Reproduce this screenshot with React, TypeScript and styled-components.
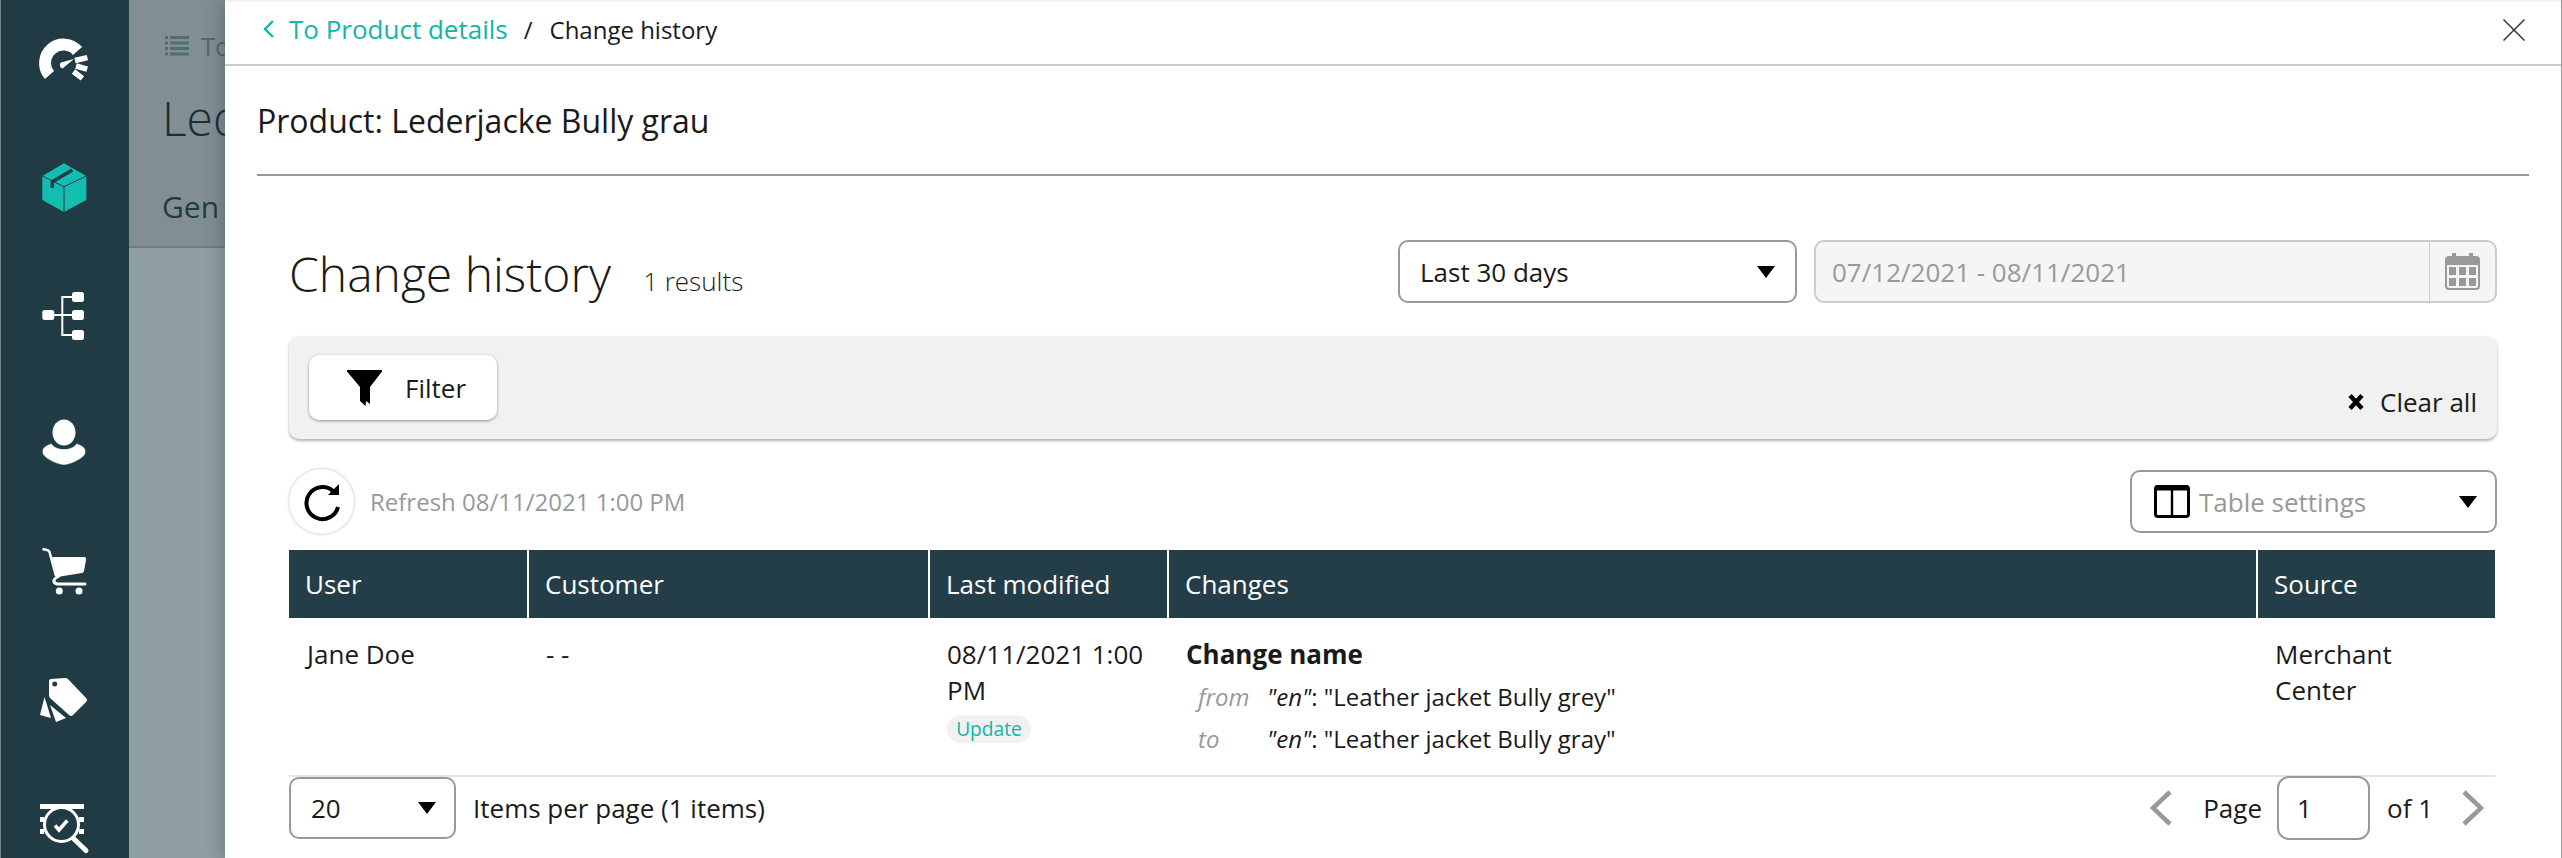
import React from "react";
import styled, { createGlobalStyle } from "styled-components";

const Global = createGlobalStyle`
  html, body { margin: 0; padding: 0; height: 100%; overflow: hidden; background: #8f9ea3; }
  * { box-sizing: border-box; }
  body { font-family: "Open Sans", "Liberation Sans", sans-serif; color: #1a1a1a; }
`;

const Page = styled.div`
  position: relative;
  display: flex;
  width: 2562px;
  height: 858px;
  overflow: hidden;
`;

const Sidebar = styled.nav`
  flex: 0 0 129px;
  display: flex;
  flex-direction: column;
  align-items: center;
  gap: 68px;
  padding-top: 30px;
  background: #213b45;
  border-left: 1.5px solid #75848a;
`;

const NavIcon = styled.svg`
  display: block;
  width: 60px;
  height: 60px;
  flex: none;
  margin-left: -1.5px;
`;

const Behind = styled.div`
  flex: 1;
  background: #8f9ea3;
`;

const BehindHead = styled.div`
  height: 248px;
  padding: 22px 0 0 33px;
  background: #818f94;
  border-bottom: 2px solid #6e7d83;
`;

const BehindCrumb = styled.div`
  display: flex;
  align-items: center;
  gap: 12px;
  height: 48px;
  padding-left: 3px;
  font-size: 25.6px;
  color: #55676e;
`;

const BehindTitle = styled.div`
  margin-top: 14px;
  font-size: 48px;
  font-weight: 300;
  line-height: 68px;
  color: #1d2d33;
  white-space: nowrap;
`;

const BehindTab = styled.div`
  margin-top: 35px;
  font-size: 30px;
  line-height: 40px;
  color: #213b45;
`;

const Modal = styled.div`
  position: absolute;
  left: 225px;
  top: 0;
  width: 2337px;
  height: 858px;
  background: #fff;
  border-right: 1.5px solid #999;
  box-shadow: 0 0 18px rgba(40, 55, 60, 0.45);
  overflow: hidden;
`;

const TopBar = styled.header`
  display: flex;
  align-items: center;
  height: 66px;
  padding: 0 36px 8px 37px;
  border-top: 2px solid #f1f1f1;
  border-bottom: 2px solid #ccc;
`;

const BackLink = styled.a`
  display: flex;
  align-items: center;
  gap: 14px;
  font-size: 26px;
  color: #13b5a8;
`;

const Slash = styled.span`
  margin: 0 17px 0 16px;
  font-size: 24px;
`;

const Current = styled.span`
  font-size: 24px;
`;

const CloseButton = styled.button`
  margin: 2px 0 0 auto;
  padding: 0;
  border: 0;
  background: none;
  line-height: 0;
`;

const ProductBlock = styled.div`
  display: flex;
  align-items: center;
  height: 110px;
  margin: 0 32px 0 32px;
  border-bottom: 2px solid #999;
  font-size: 32px;
`;

const Content = styled.main`
  padding: 64px 64px 0 64px;
`;

const HeadRow = styled.div`
  display: flex;
  align-items: center;
  height: 63px;
`;

const PageTitle = styled.h1`
  margin: 3px 0 0;
  font-size: 48px;
  font-weight: 300;
  line-height: 63px;
`;

const Results = styled.span`
  margin: 19px 0 0 32px;
  font-size: 26px;
  font-weight: 300;
`;

const SelectBox = styled.div<{ $w: number; $h?: number; $pr?: number }>`
  display: flex;
  align-items: center;
  justify-content: space-between;
  width: ${(p) => p.$w}px;
  height: ${(p) => p.$h ?? 63}px;
  padding: 0 ${(p) => p.$pr ?? 20}px 0 20px;
  background: #fff;
  border: 2px solid #999;
  border-radius: 10px;
  font-size: 26px;
`;

const RangeSelect = styled(SelectBox)`
  margin-left: auto;
`;

const DateBox = styled.div`
  display: flex;
  width: 683px;
  height: 63px;
  margin-left: 17px;
  background: #f5f5f5;
  border: 2px solid #ccc;
  border-radius: 10px;
  font-size: 26px;
  color: #999;
`;

const DateText = styled.div`
  flex: 1;
  display: flex;
  align-items: center;
  padding-left: 16px;
  border-right: 1px solid #ccc;
`;

const DateIcon = styled.div`
  flex: 0 0 65px;
  display: flex;
  align-items: center;
  justify-content: center;
`;

const FilterBar = styled.section`
  display: flex;
  justify-content: space-between;
  height: 103px;
  margin-top: 33px;
  padding: 19px 20px 0;
  background: #f1f1f1;
  border-radius: 10px;
  box-shadow: 0 2px 3px rgba(0, 0, 0, 0.3);
`;

const FilterButton = styled.button`
  display: flex;
  align-items: center;
  gap: 22px;
  width: 188px;
  height: 65px;
  padding: 0 0 0 38px;
  background: #fff;
  border: 0;
  border-radius: 10px;
  box-shadow: 0 1px 3px rgba(0, 0, 0, 0.4);
  font: inherit;
  font-size: 26px;
  color: #1a1a1a;
`;

const ClearAll = styled.div`
  display: flex;
  align-items: center;
  gap: 15px;
  height: 36px;
  margin-top: 29px;
  font-size: 26px;
`;

const ToolRow = styled.div`
  display: flex;
  align-items: center;
  justify-content: space-between;
  height: 65px;
  margin-top: 30px;
`;

const RefreshGroup = styled.div`
  display: flex;
  align-items: center;
  gap: 16px;
  font-size: 24px;
  color: #999;
`;

const RefreshButton = styled.button`
  display: flex;
  align-items: center;
  justify-content: center;
  width: 65px;
  height: 65px;
  padding: 2px 0 0;
  background: #fff;
  border: 0;
  border-radius: 50%;
  box-shadow: 0 0 3px rgba(0, 0, 0, 0.3);
`;

const SettingsSelect = styled.div`
  display: flex;
  align-items: center;
  width: 367px;
  height: 63px;
  padding: 0 18px 0 22px;
  border: 2px solid #999;
  border-radius: 10px;
  font-size: 26px;
  color: #999;
  gap: 9px;
`;

const SettingsArrow = styled.span`
  margin-left: auto;
  line-height: 0;
`;

const Table = styled.table`
  width: 2206px;
  margin-top: 16px;
  border-collapse: collapse;
  table-layout: fixed;
  font-size: 26px;
`;

const HeadCell = styled.th<{ $w: number }>`
  width: ${(p) => p.$w}px;
  height: 68px;
  padding: 0 0 0 16px;
  background: #233e49;
  border-right: 2px solid #fff;
  color: #fff;
  font-weight: 400;
  text-align: left;
  &:last-child {
    border-right: 0;
  }
`;

const Cell = styled.td<{ $pr?: number }>`
  height: 158px;
  padding: 18px ${(p) => p.$pr ?? 18}px 0 18px;
  border-bottom: 2px solid #e5e5e5;
  vertical-align: top;
  line-height: 36px;
`;

const Badge = styled.span`
  display: block;
  width: 84px;
  height: 28px;
  margin-top: 7px;
  background: #f1f1f1;
  border-radius: 14px;
  color: #13b5a8;
  font-size: 19.2px;
  line-height: 28px;
  text-align: center;
`;

const ChangeName = styled.div`
  margin-bottom: 4px;
  font-weight: 700;
  line-height: 36px;
`;

const ChangeLine = styled.div`
  display: flex;
  height: 42px;
  align-items: center;
  padding-left: 12px;
  font-size: 24px;
`;

const ChangeLabel = styled.i`
  flex: 0 0 69px;
  color: #999;
`;

const Footer = styled.footer`
  display: flex;
  align-items: center;
  height: 62px;
  font-size: 26px;
`;

const PerPage = styled.span`
  margin-left: 17px;
`;

const Pager = styled.div`
  display: flex;
  align-items: center;
  margin-left: auto;
  margin-right: 13px;
`;

const PageInput = styled.div`
  display: flex;
  align-items: center;
  width: 93px;
  height: 64px;
  margin: 0 17px 0 15px;
  padding-left: 18px;
  border: 2px solid #999;
  border-radius: 12px;
`;

const PageLabel = styled.span`
  margin-left: 31px;
`;

const OfLabel = styled.span`
  margin-right: 29px;
`;

const Arrow = () => (
  <svg width="18" height="12" viewBox="0 0 18 12">
    <path d="M0 0H18L9 12Z" fill="#000" />
  </svg>
);

const W = "#fff";

const GaugeIcon = () => (
  <NavIcon viewBox="0 0 60 60">
    <path d="M15.5 45A18 18 0 1 1 43.5 21" fill="none" stroke={W} strokeWidth="12" />
    <path d="M41 30.5L53.4 27.6M42 36L53.2 39.2M39.5 41.5L48.4 48.4" stroke={W} strokeWidth="5.5" />
    <path d="M40 29L27 32.5A3.5 3.5 0 0 0 28.5 38.5Z" fill={W} />
  </NavIcon>
);

const CubeIcon = () => (
  <NavIcon viewBox="0 0 60 60">
    <path d="M30 5.3L52.3 18V42L30 54L8.3 42V18Z" fill="#13bdb0" />
    <path d="M8.3 18L30 28.7L52.3 18M30 28.7V54" fill="none" stroke="#213b45" strokeWidth="1" />
    <path d="M18.3 30V23.7L38.3 12" fill="none" stroke="#213b45" strokeWidth="3.5" />
  </NavIcon>
);

const TreeIcon = () => (
  <NavIcon viewBox="0 0 60 60">
    <rect x="8.3" y="24" width="12" height="10" rx="2.5" fill={W} />
    <rect x="38" y="6" width="12" height="10" rx="2.5" fill={W} />
    <rect x="38" y="24" width="12" height="10" rx="2.5" fill={W} />
    <rect x="38" y="44" width="12" height="10" rx="2.5" fill={W} />
    <path d="M39 11H28.3V49H39M20 29H39" fill="none" stroke={W} strokeWidth="2" />
  </NavIcon>
);

const UserIcon = () => (
  <NavIcon viewBox="0 0 60 60">
    <ellipse cx="30" cy="18.5" rx="11.5" ry="13" fill={W} />
    <path d="M8.3 38C8.3 33 13 31 17.5 29.5C19 33 25 35 30 35C35 35 41 33 42.5 29.5C47 31 51.7 33 51.7 38C51.7 44 36 51 30 51C24 51 8.3 44 8.3 38Z" fill={W} stroke="#213b45" strokeWidth="0.5" />
  </NavIcon>
);

const CartIcon = () => (
  <NavIcon viewBox="0 0 60 60">
    <path d="M8.5 7L13 8Q15 8.5 15.5 10L22 34" fill="none" stroke={W} strokeWidth="2.5" />
    <path d="M18 15L50 15Q52.5 15 52 18L50 29Q49.5 31 48 31L23 35Z" fill={W} />
    <path d="M25 34Q19 37 20 40Q21 42 25 42H51" fill="none" stroke={W} strokeWidth="3" strokeLinecap="round" />
    <circle cx="25.3" cy="49" r="3.5" fill={W} />
    <circle cx="45" cy="49" r="3.5" fill={W} />
  </NavIcon>
);

const TagsIcon = () => (
  <NavIcon viewBox="0 0 60 60">
    <path d="M17 9L31 8Q33 8 34 9L52 28Q54 30 52 32L39 45Q37 47 35 45L16 28Q15 27 15 25V11Q15 9 17 9Z" fill={W} />
    <circle cx="20.7" cy="14" r="2.5" fill="#213b45" />
    <path d="M10.5 27L17 48L6 45Z" fill={W} />
    <path d="M16 35L32 48L22 52Z" fill={W} />
  </NavIcon>
);

const SearchCheckIcon = () => (
  <NavIcon viewBox="0 0 60 60">
    <path d="M6 6H50V11H6ZM6 19H10V24H6ZM6 31H10V36H6ZM45 19H50V24H45ZM45 31H50V36H45Z" fill={W} />
    <circle cx="27.5" cy="26.5" r="17" fill="#213b45" stroke={W} strokeWidth="3" />
    <path d="M40 41L52 52.5" stroke={W} strokeWidth="5" strokeLinecap="round" />
    <path d="M21 27.5L25 32L33.3 22.5" fill="none" stroke={W} strokeWidth="3.5" />
  </NavIcon>
);

const ListIcon = () => (
  <svg width="24" height="20" viewBox="0 0 24 20">
    <path d="M0 0H3V3H0ZM0 5.5H3V8.5H0ZM0 11H3V14H0ZM0 16.5H3V19.5H0Z" fill="#5a6a70" />
    <path d="M5 0H24V3H5ZM5 5.5H24V8.5H5ZM5 11H24V14H5ZM5 16.5H24V19.5H5Z" fill="#5a6a70" />
    <path d="M8 3.5H22M8 9H22M8 14.5H22" stroke="#13bdb0" strokeWidth="1" strokeDasharray="2 3" />
  </svg>
);

const ChevronLeft = () => (
  <svg width="13" height="20" viewBox="0 0 13 20">
    <path d="M11 2L3 10L11 18" fill="none" stroke="#13b5a8" strokeWidth="2.4" />
  </svg>
);

const CloseIcon = () => (
  <svg width="22" height="22" viewBox="0 0 22 22">
    <path d="M0.5 0.5L21.5 21.5M21.5 0.5L0.5 21.5" stroke="#2a3a40" strokeWidth="1.5" />
  </svg>
);

const CalendarIcon = () => (
  <svg width="35" height="37" viewBox="0 0 35 37">
    <path d="M4 3H7V0H11V3H24V0H28V3H31Q35 3 35 7V33Q35 37 31 37H4Q0 37 0 33V7Q0 3 4 3ZM2 12V33Q2 35 4 35H31Q33 35 33 33V12Z" fill="#999" />
    <path d="M4 14H11V22H4ZM14 14H21V22H14ZM24 14H31V22H24ZM4 25H11V33H4ZM14 25H21V33H14ZM24 25H31V33H24Z" fill="#999" />
  </svg>
);

const FunnelIcon = () => (
  <svg width="36" height="36" viewBox="0 0 36 36">
    <path d="M0 0H35V1.5L23 17V34L19 31L18.5 36L13 31V17L0 1.5Z" fill="#000" />
  </svg>
);

const CrossIcon = () => (
  <svg width="18" height="18" viewBox="0 0 18 18">
    <path d="M3 2.5L15 15.5M15 2.5L3 15.5" stroke="#000" strokeWidth="4.4" />
  </svg>
);

const RefreshIcon = () => (
  <svg width="38" height="38" viewBox="0 0 38 38">
    <path d="M35 23A16 16 0 1 1 30 7" fill="none" stroke="#000" strokeWidth="4" />
    <path d="M25 11H36V0Z" fill="#000" />
  </svg>
);

const ColumnsIcon = () => (
  <svg width="36" height="33" viewBox="0 0 36 33">
    <rect x="1.5" y="1.5" width="33" height="30" rx="2.5" fill="none" stroke="#000" strokeWidth="3" />
    <path d="M1.5 3H34.5" stroke="#000" strokeWidth="5" />
    <path d="M18 2V31" stroke="#000" strokeWidth="2.4" />
  </svg>
);

const PagerChevron = ({ right }: { right?: boolean }) => (
  <svg width="22" height="36" viewBox="0 0 22 36">
    <path d={right ? "M2 2L19 18L2 34" : "M20 2L3 18L20 34"} fill="none" stroke="#999" strokeWidth="4.5" />
  </svg>
);

export default function App() {
  return (
    <Page>
      <Global />
      <Sidebar>
        <GaugeIcon />
        <CubeIcon />
        <TreeIcon />
        <UserIcon />
        <CartIcon />
        <TagsIcon />
        <SearchCheckIcon />
      </Sidebar>
      <Behind>
        <BehindHead>
          <BehindCrumb>
            <ListIcon />
            <span>To</span>
          </BehindCrumb>
          <BehindTitle>Led</BehindTitle>
          <BehindTab>Gen</BehindTab>
        </BehindHead>
      </Behind>
      <Modal>
        <TopBar>
          <BackLink>
            <ChevronLeft />
            To Product details
          </BackLink>
          <Slash>/</Slash>
          <Current>Change history</Current>
          <CloseButton>
            <CloseIcon />
          </CloseButton>
        </TopBar>
        <ProductBlock>Product: Lederjacke Bully grau</ProductBlock>
        <Content>
          <HeadRow>
            <PageTitle>Change history</PageTitle>
            <Results>1 results</Results>
            <RangeSelect $w={399}>
              Last 30 days
              <Arrow />
            </RangeSelect>
            <DateBox>
              <DateText>07/12/2021 - 08/11/2021</DateText>
              <DateIcon>
                <CalendarIcon />
              </DateIcon>
            </DateBox>
          </HeadRow>
          <FilterBar>
            <FilterButton>
              <FunnelIcon />
              Filter
            </FilterButton>
            <ClearAll>
              <CrossIcon />
              Clear all
            </ClearAll>
          </FilterBar>
          <ToolRow>
            <RefreshGroup>
              <RefreshButton>
                <RefreshIcon />
              </RefreshButton>
              Refresh 08/11/2021 1:00 PM
            </RefreshGroup>
            <SettingsSelect>
              <ColumnsIcon />
              Table settings
              <SettingsArrow>
                <Arrow />
              </SettingsArrow>
            </SettingsSelect>
          </ToolRow>
          <Table>
            <thead>
              <tr>
                <HeadCell $w={239}>User</HeadCell>
                <HeadCell $w={401}>Customer</HeadCell>
                <HeadCell $w={239}>Last modified</HeadCell>
                <HeadCell $w={1089}>Changes</HeadCell>
                <HeadCell $w={238}>Source</HeadCell>
              </tr>
            </thead>
            <tbody>
              <tr>
                <Cell>Jane Doe</Cell>
                <Cell>- -</Cell>
                <Cell>
                  08/11/2021 1:00 PM
                  <Badge>Update</Badge>
                </Cell>
                <Cell>
                  <ChangeName>Change name</ChangeName>
                  <ChangeLine>
                    <ChangeLabel>from</ChangeLabel>
                    <span>
                      <i>"en"</i>: "Leather jacket Bully grey"
                    </span>
                  </ChangeLine>
                  <ChangeLine>
                    <ChangeLabel>to</ChangeLabel>
                    <span>
                      <i>"en"</i>: "Leather jacket Bully gray"
                    </span>
                  </ChangeLine>
                </Cell>
                <Cell $pr={30}>Merchant Center</Cell>
              </tr>
            </tbody>
          </Table>
          <Footer>
            <SelectBox $w={167} $h={62} $pr={18}>
              20
              <Arrow />
            </SelectBox>
            <PerPage>Items per page (1 items)</PerPage>
            <Pager>
              <PagerChevron />
              <PageLabel>Page</PageLabel>
              <PageInput>1</PageInput>
              <OfLabel>of 1</OfLabel>
              <PagerChevron right />
            </Pager>
          </Footer>
        </Content>
      </Modal>
    </Page>
  );
}
